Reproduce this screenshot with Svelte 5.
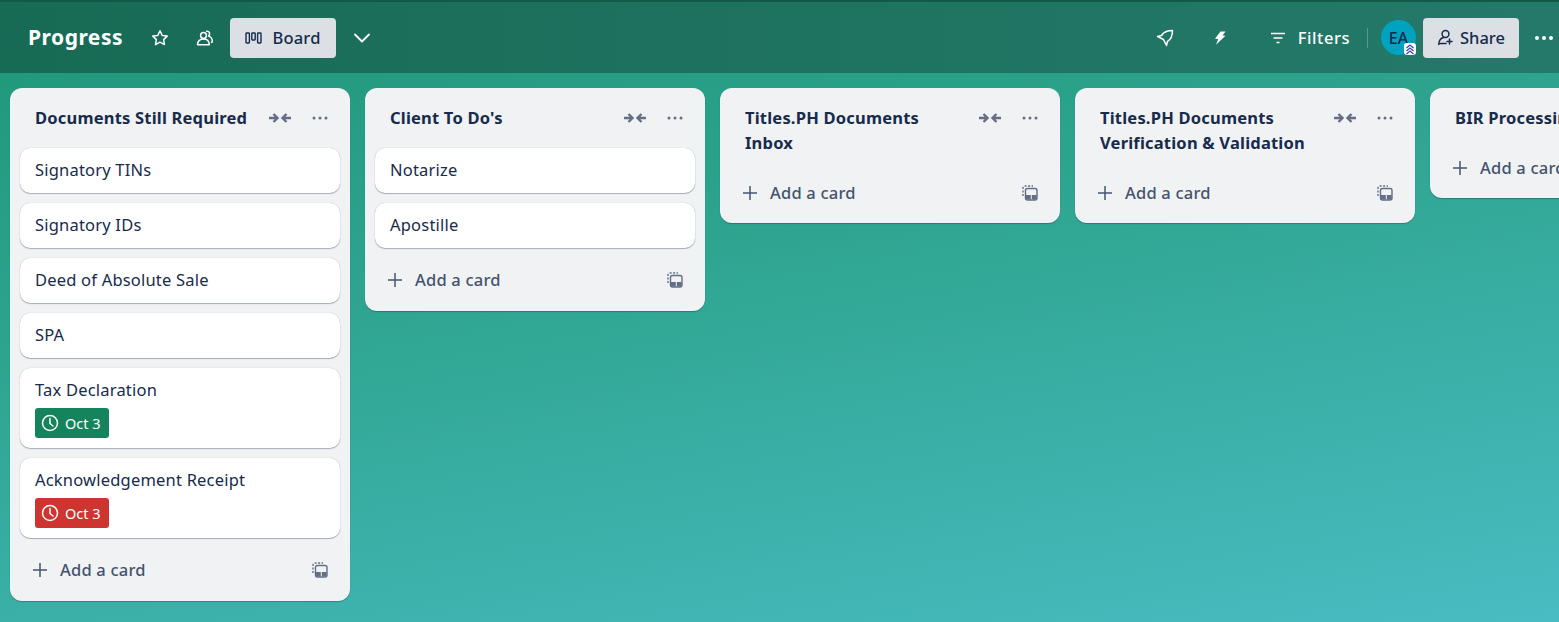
<script>
  const lists = [
    {
      title: 'Documents Still Required',
      cards: [
        { name: 'Signatory TINs' },
        { name: 'Signatory IDs' },
        { name: 'Deed of Absolute Sale' },
        { name: 'SPA' },
        { name: 'Tax Declaration', due: 'green' },
        { name: 'Acknowledgement Receipt', due: 'red' }
      ]
    },
    { title: "Client To Do's", cards: [{ name: 'Notarize' }, { name: 'Apostille' }] },
    { title: 'Titles.PH Documents Inbox', cards: [] },
    { title: 'Titles.PH Documents Verification & Validation', cards: [] },
    { title: 'BIR Processing', cards: [] }
  ];
</script>

<div class="page">
  <header class="topbar">
    <div class="left">
      <h1>Progress</h1>
      <button class="icon-btn star" aria-label="Star">
        <svg width="18" height="18" viewBox="0 0 18 18" fill="none" stroke="currentColor" stroke-width="1.5" stroke-linejoin="round"><path d="M9 1.800l2.200 4.600 5 .7-3.600 3.500.9 5L9 13.200l-4.500 2.400.9-5L1.800 7.100l5-.7z"/></svg>
      </button>
      <button class="icon-btn team" aria-label="Workspace">
        <svg width="18" height="18" viewBox="0 0 18 18" fill="none" stroke="currentColor" stroke-width="1.500" stroke-linejoin="round"><circle cx="7.500" cy="6.500" r="2.900"/><path d="M1.500 15.800c0-3.500 2.300-5.700 6-5.700s5.600 2.200 5.800 5.700z"/><path d="M10 2.400c2-.8 3.800.6 3.600 2.500-.1 1-.5 1.600-1.100 2.200 2.300.7 3.700 2.500 3.900 5 0 1-.6 1.500-1.500 1.500"/></svg>
      </button>
      <button class="view-btn">
        <svg width="17" height="16" viewBox="0 0 17 16" fill="none" stroke="currentColor" stroke-width="1.400"><rect x="1" y="3" width="3.400" height="10" rx=".7"/><rect x="6.800" y="3" width="3.400" height="7" rx=".7"/><rect x="12.600" y="3" width="3.400" height="10" rx=".7"/></svg>
        Board
      </button>
      <button class="icon-btn chevron" aria-label="More views">
        <svg width="18" height="18" viewBox="0 0 18 18" fill="none" stroke="currentColor" stroke-width="1.800" stroke-linecap="round" stroke-linejoin="round"><path d="M2 5.500l7 7 7-7"/></svg>
      </button>
    </div>
    <div class="right">
      <button class="icon-btn rocket" aria-label="Power-ups">
        <svg width="18" height="18" viewBox="0 0 18 18" fill="none" stroke="currentColor" stroke-width="1.500" stroke-linejoin="round"><path d="M16.500 1.500C16.500 7 14 11 11.500 12.500L10.500 16.500 7.500 10.500 1.500 7.500 5.500 6.500C7 4 11 1.500 16.500 1.500z"/></svg>
      </button>
      <button class="icon-btn bolt" aria-label="Automation">
        <svg width="14" height="16" viewBox="0 0 14 16" fill="currentColor"><path d="M7.500 1.500H12.500L9.500 5.500 12.500 5.800 3 14.800 5.300 9 2 8.700z"/></svg>
      </button>
      <button class="filters">
        <svg width="16" height="16" viewBox="0 0 16 16" fill="none" stroke="currentColor" stroke-width="1.500"><path d="M1 3.500h14M3.500 8h9M6.500 12.500h3"/></svg>
        Filters
      </button>
      <span class="divider"></span>
      <div class="avatar">
        EA
        <span class="admin-badge">
          <svg width="12" height="12" viewBox="0 0 12 12" fill="none" stroke="#3d49b5" stroke-width="1.300"><path d="M2.500 5l3.500-3 3.500 3M2.500 8l3.500-3 3.500 3M2.500 11l3.500-3 3.500 3"/></svg>
        </span>
      </div>
      <button class="share">
        <svg width="17" height="17" viewBox="0 0 17 17" fill="none" stroke="currentColor" stroke-width="1.500" stroke-linecap="round"><circle cx="8.500" cy="5" r="3.400"/><path d="M1.700 15.500c.2-3.500 2.100-6.500 5-7M9 14.500h-7M12.500 10v5M10 12.500h5"/></svg>
        Share
      </button>
      <button class="icon-btn more" aria-label="Menu">
        <svg width="20" height="6" viewBox="0 0 20 6" fill="currentColor"><circle cx="3" cy="3" r="2"/><circle cx="10" cy="3" r="2"/><circle cx="17" cy="3" r="2"/></svg>
      </button>
    </div>
  </header>

  <main class="board">
    {#each lists as list}
      <section class="list">
        <div class="list-head">
          <h2>{list.title}</h2>
          <svg class="collapse" width="24" height="12" viewBox="0 0 24 12" fill="none" stroke="currentColor" stroke-width="2.400"><path d="M1 6h8M5.500 2L9.500 6 5.500 10M23 6h-8M18.500 2L14.500 6 18.500 10"/></svg>
          <svg class="dots" width="16" height="4" viewBox="0 0 16 4" fill="currentColor"><circle cx="2" cy="2" r="1.500"/><circle cx="8" cy="2" r="1.500"/><circle cx="14" cy="2" r="1.500"/></svg>
        </div>
        {#if list.cards.length}
          <div class="cards">
            {#each list.cards as card}
              <article class="card">
                <div class="name">{card.name}</div>
                {#if card.due}
                  <span class="due {card.due}">
                    <svg width="18" height="18" viewBox="0 0 18 18" fill="none" stroke="currentColor" stroke-width="1.500" stroke-linecap="round" stroke-linejoin="round"><circle cx="9" cy="9" r="7.500"/><path d="M9 4.500V9.500l3 2.500"/></svg>
                    Oct 3
                  </span>
                {/if}
              </article>
            {/each}
          </div>
        {/if}
        <div class="list-foot">
          <svg class="plus" width="16" height="16" viewBox="0 0 16 16" fill="none" stroke="currentColor" stroke-width="1.500"><path d="M8 1v14M1 8h14"/></svg>
          <span>Add a card</span>
          <svg class="template" width="16" height="16" viewBox="0 0 16 16" fill="none" stroke="currentColor" stroke-width="1.400"><path d="M1 11V3.500C1 2 2 1 3.500 1H11" stroke-dasharray="2 1.500"/><rect x="3.500" y="3.500" width="11.500" height="11.500" rx="2"/><rect x="4" y="10" width="4.800" height="4.500" fill="currentColor" stroke="none"/><rect x="9.800" y="10" width="4.800" height="4.500" fill="currentColor" stroke="none"/></svg>
        </div>
      </section>
    {/each}
  </main>
</div>

<style>
  :global(body) {
    margin: 0;
    font-family: "Noto Sans", "Open Sans", sans-serif;
    overflow: hidden;
  }
  .page {
    width: 1559px;
    height: 622px;
    overflow: hidden;
    background: linear-gradient(170deg, #1e9678 0%, #2ea48f 40%, #48bcc2 100%);
  }
  button {
    font: inherit;
    border: none;
    background: none;
    padding: 0;
    cursor: pointer;
    display: flex;
    align-items: center;
  }
  .topbar {
    height: 73px;
    box-sizing: border-box;
    border-top: 2px solid #125a48;
    padding: 0 5px 0 28px;
    display: flex;
    align-items: center;
    justify-content: space-between;
    background: linear-gradient(90deg, #176b55, #25796a);
    color: #fff;
  }
  .left, .right {
    display: flex;
    align-items: center;
  }
  h1 {
    margin: 0 28px 2px 0;
    font-size: 21px;
    font-weight: 700;
    letter-spacing: 0.5px;
  }
  .icon-btn {
    color: #fff;
  }
  .team {
    margin-left: 27px;
  }
  .view-btn {
    margin-left: 16px;
    width: 106px;
    height: 40px;
    justify-content: center;
    gap: 10px;
    border-radius: 4px;
    background: #dcdfe4;
    color: #172b4d;
    font-size: 16.5px;
    font-weight: 500;
    letter-spacing: 0.2px;
  }
  .chevron {
    margin-left: 17px;
  }
  .bolt {
    margin-left: 39px;
  }
  .filters {
    margin-left: 43px;
    gap: 12px;
    color: #fff;
    font-size: 16.5px;
    font-weight: 500;
    letter-spacing: 0.55px;
  }
  .divider {
    width: 1px;
    height: 20px;
    margin: 0 13px 0 17px;
    background: rgba(255, 255, 255, 0.25);
  }
  .avatar {
    position: relative;
    width: 35px;
    height: 35px;
    border-radius: 50%;
    background: #00a3bf;
    color: #172b4d;
    font-size: 16px;
    font-weight: 500;
    display: flex;
    align-items: center;
    justify-content: center;
  }
  .admin-badge {
    position: absolute;
    right: 0;
    bottom: 0;
    width: 12px;
    height: 12px;
    border-radius: 3px;
    background: #fff;
    display: flex;
  }
  .share {
    margin-left: 7px;
    width: 96px;
    height: 40px;
    justify-content: center;
    gap: 6px;
    border-radius: 4px;
    background: #dcdfe4;
    color: #172b4d;
    font-size: 16.5px;
    font-weight: 500;
  }
  .more {
    margin-left: 15px;
    width: 20px;
  }
  .board {
    display: flex;
    align-items: flex-start;
    gap: 15px;
    padding: 15px 10px;
  }
  .list {
    flex: 0 0 340px;
    box-sizing: border-box;
    border-radius: 12px;
    background: #f1f2f4;
    box-shadow: 0 1px 1px rgba(9, 30, 66, 0.3);
    color: #172b4d;
  }
  .list-head {
    display: flex;
    align-items: flex-start;
    padding: 17px 22px 6px 25px;
  }
  h2 {
    margin: 0;
    flex: 1;
    padding-right: 20px;
    font-size: 16.5px;
    line-height: 25px;
    font-weight: 700;
    letter-spacing: 0.2px;
    color: #172b4d;
    max-width: 220px;
  }
  .collapse {
    color: #626f86;
    margin-top: 7px;
    margin-left: auto;
    flex: none;
  }
  .dots {
    color: #626f86;
    margin-top: 11px;
    margin-left: 20px;
    flex: none;
  }
  .cards {
    display: flex;
    flex-direction: column;
    gap: 10px;
    margin-top: 12px;
    padding: 0 10px;
  }
  .card {
    box-sizing: border-box;
    background: #fff;
    border-radius: 10px;
    padding: 9px 15px 11px;
    box-shadow: 0 1px 1px rgba(9, 30, 66, 0.3), 0 0 1px rgba(9, 30, 66, 0.3);
  }
  .card:has(.due) {
    padding-bottom: 10px;
  }
  .name {
    font-size: 16.5px;
    line-height: 25px;
    letter-spacing: 0.2px;
  }
  .due {
    display: flex;
    align-items: center;
    gap: 6px;
    margin-top: 6px;
    width: 74px;
    height: 30px;
    box-sizing: border-box;
    padding-left: 6px;
    border-radius: 3px;
    color: #fff;
    font-size: 14.5px;
  }
  .green {
    background: #15845c;
  }
  .red {
    background: #cf3530;
  }
  .list-foot {
    display: flex;
    align-items: center;
    height: 62px;
    padding: 0 22px;
    color: #44546f;
    font-size: 16.5px;
    font-weight: 500;
    letter-spacing: 0.2px;
  }
  .cards + .list-foot {
    margin-bottom: 1px;
  }
  .list-foot span {
    margin-left: 12px;
  }
  .plus {
    margin-top: 2px;
  }
  .template {
    margin-top: 2px;
    margin-left: auto;
    color: #626f86;
  }
</style>
